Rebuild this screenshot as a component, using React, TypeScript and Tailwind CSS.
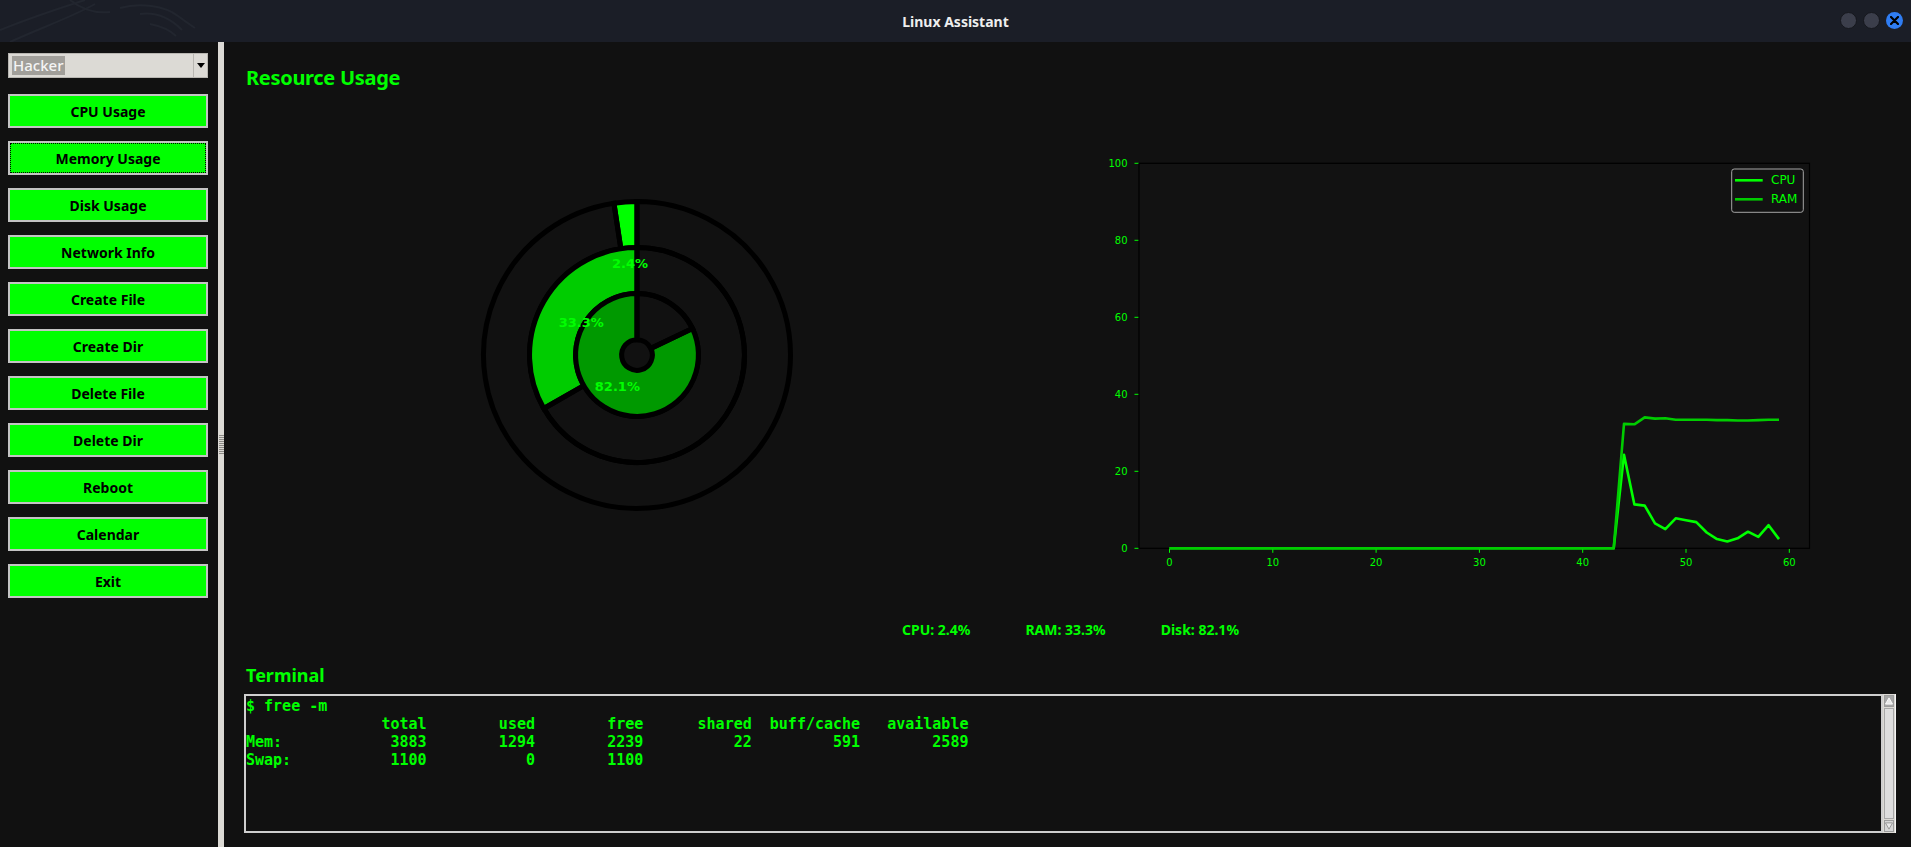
import type { ReactNode } from 'react'

const BUTTONS = [
  'CPU Usage', 'Memory Usage', 'Disk Usage', 'Network Info', 'Create File',
  'Create Dir', 'Delete File', 'Delete Dir', 'Reboot', 'Calendar', 'Exit',
]

const CPU = 2.4
const RAM = 33.3
const DISK = 82.1

const zeros = Array(44).fill(0)
const cpuHist = [...zeros, 24.3, 11.4, 11.1, 6.5, 5.0, 7.8, 7.3, 6.8, 4.1, 2.4, 1.8, 2.6, 4.3, 3.0, 6.0, 2.4]
const ramHist = [...zeros, 32.3, 32.2, 34.0, 33.7, 33.8, 33.4, 33.4, 33.4, 33.4, 33.3, 33.3, 33.2, 33.2, 33.3, 33.4, 33.4]

const TERMINAL = `$ free -m
               total        used        free      shared  buff/cache   available
Mem:            3883        1294        2239          22         591        2589
Swap:           1100           0        1100`

function pt(cx: number, cy: number, r: number, deg: number) {
  const a = (deg * Math.PI) / 180
  return [cx + r * Math.cos(a), cy - r * Math.sin(a)]
}

// annular sector, angles in degrees, counter-clockwise from a0 to a1
function sector(cx: number, cy: number, r0: number, r1: number, a0: number, a1: number) {
  const large = a1 - a0 > 180 ? 1 : 0
  const [x1, y1] = pt(cx, cy, r1, a0)
  const [x2, y2] = pt(cx, cy, r1, a1)
  const [x3, y3] = pt(cx, cy, r0, a1)
  const [x4, y4] = pt(cx, cy, r0, a0)
  return `M${x1} ${y1} A${r1} ${r1} 0 ${large} 0 ${x2} ${y2} L${x3} ${y3} A${r0} ${r0} 0 ${large} 1 ${x4} ${y4}Z`
}

function TitleBar() {
  return (
    <div className="relative h-[42px] flex items-center justify-center bg-[#1b1e27] shrink-0">
      {/* faint dragon watermark */}
      <svg className="absolute left-0 top-0" width="220" height="42" viewBox="0 0 220 42">
        <g fill="none" stroke="#22262f" strokeWidth="2">
          <path d="M0 30 C 30 18, 60 8, 85 0" />
          <path d="M10 42 C 40 28, 70 18, 95 4" />
          <path d="M70 0 C 80 8, 92 14, 110 12" />
          <path d="M120 8 C 140 2, 165 6, 178 16 C 186 22, 192 26, 195 28" />
          <path d="M140 14 C 155 12, 170 18, 182 30" />
          <path d="M150 24 C 160 26, 170 30, 176 36" />
        </g>
      </svg>
      <span className="relative text-[14px] font-bold text-[#eeeeee] font-['Noto_Sans',sans-serif]">
        Linux Assistant
      </span>
      <div className="absolute right-[8px] top-[12px] flex gap-[6px]">
        <div className="w-[17px] h-[17px] rounded-full bg-[#3b3e4b] border border-[#15171d]" />
        <div className="w-[17px] h-[17px] rounded-full bg-[#3b3e4b] border border-[#15171d]" />
        <div className="w-[17px] h-[17px] rounded-full bg-[#2f7df3] flex items-center justify-center">
          <svg width="9" height="9" viewBox="0 0 9 9">
            <path d="M1 1L8 8M8 1L1 8" stroke="#000" strokeWidth="2.2" strokeLinecap="round" />
          </svg>
        </div>
      </div>
    </div>
  )
}

function Sidebar() {
  return (
    <div className="w-[218px] shrink-0 bg-[#111111] pl-[8px] pt-[11px] flex flex-col font-['Noto_Sans',sans-serif]">
      <div className="w-[200px] h-[25px] flex bg-[#dcdad5] border border-[#b8b6b1]">
        <div className="flex-1 flex items-center pl-[3px]">
          <span className="bg-[#a19f9a] text-[#f4f4f4] text-[15px] leading-[19px] font-medium px-[1px]">Hacker</span>
        </div>
        <div className="w-[14px] border-l border-[#b8b6b1] flex items-center justify-center">
          <svg width="8" height="5" viewBox="0 0 8 5">
            <path d="M0 0H8L4 5Z" fill="#000" />
          </svg>
        </div>
      </div>
      <div className="mt-[16px] flex flex-col gap-[13px]">
        {BUTTONS.map((b) => (
          <button
            key={b}
            className={
              'w-[200px] h-[34px] bg-[#00ff00] border-2 border-[#c4c4c4] text-black text-[14px] font-bold flex items-center justify-center' +
              (b === 'Memory Usage' ? ' outline-1 outline-dotted outline-black outline-offset-[-3px]' : '')
            }
          >
            {b}
          </button>
        ))}
      </div>
    </div>
  )
}

function Splitter() {
  return (
    <div className="w-[6px] shrink-0 bg-[#dcdad5] flex items-center justify-center">
      <div className="flex flex-col gap-[1px] w-[5px]">
        {Array.from({ length: 10 }).map((_, i) => (
          <div key={i} className="h-[1px] bg-[#8c8a86]" />
        ))}
      </div>
    </div>
  )
}

function Donut() {
  const cx = 392
  const cy = 263
  const R = 153.5
  const rings = [
    { v: CPU, r1: R, r0: R * 0.7, color: '#00ff00' },
    { v: RAM, r1: R * 0.7, r0: R * 0.4, color: '#00cc00' },
    { v: DISK, r1: R * 0.4, r0: R * 0.1, color: '#009900' },
  ]
  return (
    <svg width="784" height="526" className="shrink-0">
      {rings.map((g, i) => {
        const end = 90 + (g.v / 100) * 360
        return (
          <g key={i} stroke="#000" strokeWidth="5" strokeLinejoin="miter">
            <path d={sector(cx, cy, g.r0, g.r1, 90, end)} fill={g.color} />
            <path d={sector(cx, cy, g.r0, g.r1, end, 450)} fill="none" />
          </g>
        )
      })}
      {rings.map((g, i) => {
        const mid = 90 + (g.v / 100) * 180
        const [x, y] = pt(cx, cy, g.r1 * 0.6, mid)
        return (
          <text
            key={i}
            x={x}
            y={y}
            textAnchor="middle"
            dominantBaseline="central"
            fill="#00ff00"
            fontFamily="DejaVu Sans, sans-serif"
            fontWeight="bold"
            fontSize="13"
          >
            {g.v}%
          </text>
        )
      })}
    </svg>
  )
}

function LineChart() {
  const left = 110
  const right = 780.5
  const top = 71.3
  const bottom = 456.3
  const X = (i: number) => 140.5 + i * 10.33
  const Y = (v: number) => bottom - v * 3.85
  const line = (d: number[]) => d.map((v, i) => `${X(i).toFixed(1)},${Y(v).toFixed(1)}`).join(' ')
  const tickText = { fill: '#00ff00', fontFamily: 'DejaVu Sans, sans-serif', fontSize: 10 }
  return (
    <svg width="867" height="526" className="shrink-0">
      <rect x={left} y={top} width={right - left} height={bottom - top} fill="#121212" />
      {[0, 20, 40, 60, 80, 100].map((v) => (
        <g key={v}>
          <line x1={left - 4.5} x2={left} y1={Y(v)} y2={Y(v)} stroke="#00ff00" strokeWidth="1" />
          <text x={left - 11.5} y={Y(v)} textAnchor="end" dominantBaseline="central" {...tickText}>
            {v}
          </text>
        </g>
      ))}
      {[0, 10, 20, 30, 40, 50, 60].map((v) => (
        <g key={v}>
          <line x1={X(v)} x2={X(v)} y1={bottom} y2={bottom + 4.5} stroke="#00ff00" strokeWidth="1" />
          <text x={X(v)} y={bottom + 14.5} textAnchor="middle" dominantBaseline="central" {...tickText}>
            {v}
          </text>
        </g>
      ))}
      <rect x={left} y={top} width={right - left} height={bottom - top} fill="none" stroke="#000" strokeWidth="1.2" />
      <polyline points={line(cpuHist)} fill="none" stroke="#00ff00" strokeWidth="2.6" strokeLinejoin="round" />
      <polyline points={line(ramHist)} fill="none" stroke="#00cc00" strokeWidth="2.6" strokeLinejoin="round" />
      {/* legend */}
      <rect x="702.7" y="77" width="71.6" height="43.3" rx="2.5" fill="#121212" stroke="#a6a6a6" strokeWidth="1" />
      <line x1="706" x2="733.7" y1="88.3" y2="88.3" stroke="#00ff00" strokeWidth="2.6" />
      <line x1="706" x2="733.7" y1="107.3" y2="107.3" stroke="#00cc00" strokeWidth="2.6" />
      <text x="742" y="88.3" dominantBaseline="central" fill="#00ff00" fontFamily="DejaVu Sans, sans-serif" fontSize="12">
        CPU
      </text>
      <text x="742" y="107.3" dominantBaseline="central" fill="#00ff00" fontFamily="DejaVu Sans, sans-serif" fontSize="12">
        RAM
      </text>
    </svg>
  )
}

function ArrowBox({ children, dark }: { children: ReactNode; dark?: boolean }) {
  return (
    <div className={'h-[12px] flex items-center justify-center border border-[#9c9c9c] ' + (dark ? 'bg-[#a6a6a6]' : 'bg-[#d6d6d6]')}>
      {children}
    </div>
  )
}

function Scrollbar() {
  return (
    <div className="w-[13px] shrink-0 bg-[#dcdad5] flex flex-col p-[1px] border-r border-[#f4f4f4]">
      <ArrowBox dark>
        <svg width="9" height="8" viewBox="0 0 9 8">
          <path d="M4.5 0.5L8.5 7.5H0.5Z" fill="#e9e9e9" stroke="#ffffff" strokeWidth="1" />
        </svg>
      </ArrowBox>
      <div className="flex-1 my-[1px] bg-[#dedede] border border-[#a8a8a8]" />
      <ArrowBox>
        <svg width="9" height="8" viewBox="0 0 9 8">
          <path d="M4.5 7.5L8.5 0.5H0.5Z" fill="#e9e9e9" stroke="#8f8f8f" strokeWidth="1" />
        </svg>
      </ArrowBox>
    </div>
  )
}

export default function App() {
  return (
    <div className="w-[1911px] h-[847px] flex flex-col bg-[#111111] overflow-hidden">
      <TitleBar />
      <div className="flex flex-1 min-h-0">
        <Sidebar />
        <Splitter />
        <main className="flex-1 min-w-0 flex flex-col pl-[21px] pr-[15px] pt-[22px] font-['Noto_Sans',sans-serif] text-[#00ff00]">
          <h1 className="text-[20px] leading-[28px] font-bold tracking-[-0.3px] pl-[1px]">Resource Usage</h1>
          <div className="flex h-[526px]">
            <Donut />
            <LineChart />
          </div>
          <div className="h-[24px] flex justify-center gap-[55px] text-[14px] leading-[24px] font-bold">
            <span>CPU: {CPU}%</span>
            <span>RAM: {RAM}%</span>
            <span>Disk: {DISK}%</span>
          </div>
          <h2 className="mt-[21px] text-[18px] leading-[24px] font-bold pl-[1px]">Terminal</h2>
          <div className="mt-[7px] -ml-[1px] h-[139px] flex">
            <pre className="flex-1 border-2 border-[#cfcfcf] bg-[#111111] pl-0 pt-[1px] font-['DejaVu_Sans_Mono',monospace] text-[15px] leading-[18px] font-bold text-[#00ff00] overflow-hidden">
              {TERMINAL}
            </pre>
            <Scrollbar />
          </div>
        </main>
      </div>
    </div>
  )
}
